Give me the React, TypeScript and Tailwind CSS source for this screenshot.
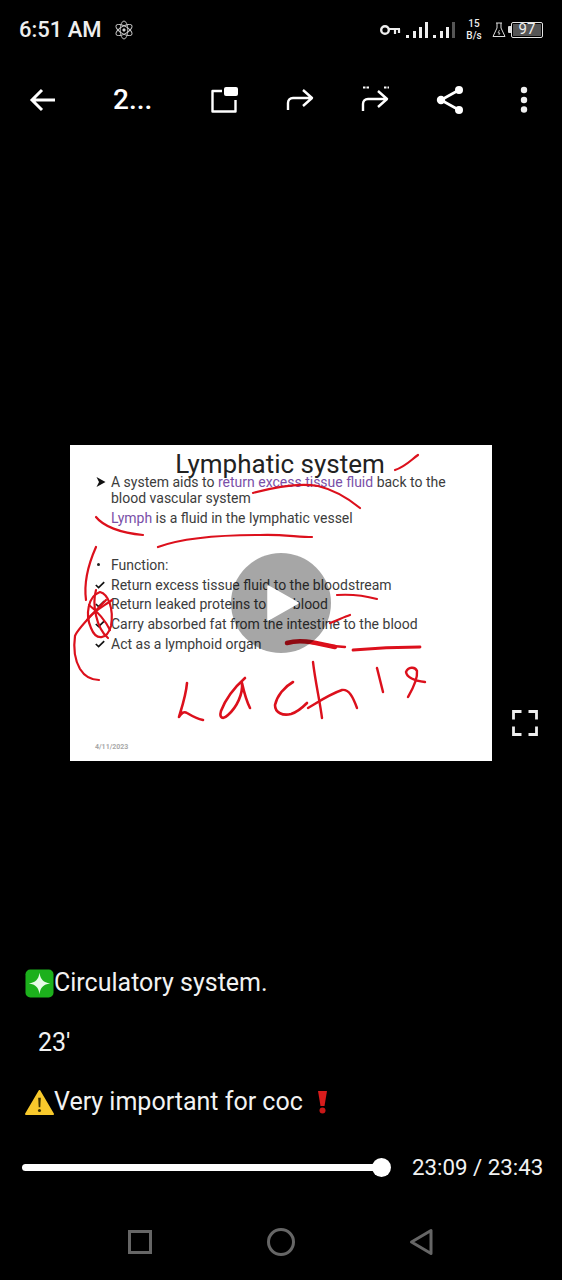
const roboto = "font-['Roboto',sans-serif]"

function Check() {
  return (
    <svg viewBox="0 0 10 8" className="h-[8px] w-[10px]">
      <path d="M.8 4 3.6 6.6 9.2 1.2" fill="none" stroke="#111" strokeWidth="1.7" />
    </svg>
  )
}

function SlideRow({ icon, children }: { icon: React.ReactNode; children: React.ReactNode }) {
  return (
    <div className="flex h-[19.75px] items-center">
      <div className="flex w-[16px] items-center">{icon}</div>
      <span className="whitespace-nowrap">{children}</span>
    </div>
  )
}

function Ink() {
  return (
    <svg viewBox="70 445 422 316" className="absolute inset-0 h-full w-full" fill="none" stroke="#dc101c" strokeWidth="2.2" strokeLinecap="round" strokeLinejoin="round">
      <path d="M395 470C405 467 411 460 418 455" />
      <path d="M253 493C275 487 300 483 318 486C335 490 349 499 360 508" />
      <path d="M96 517C103 526 120 533 143 535" />
      <path d="M158 547C185 537 225 535 260 535C280 534 298 537 312 537" />
      <path d="M96 547C88 565 84 585 86 600" />
      <path d="M106 600C92 615 78 628 75 636C73 650 76 662 80 669C85 677 92 680 99 680" />
      <path d="M100 592C88 596 85 615 91 628C96 641 107 640 111 626C114 608 108 594 100 592Z" />
      <path d="M96 590C92 604 96 628 108 638M112 600C104 606 92 612 87 620M89 605C98 612 106 622 110 630" />
      <path d="M337 595C352 594 366 596 377 599" />
      <path d="M330 623C338 620 344 617 350 615" />
      <path d="M287 643C300 639 312 642 335 647" strokeWidth="4.5" />
      <path d="M300 641C318 644 332 646 345 647" strokeWidth="2.4" />
      <path d="M353 650C375 648 400 647 420 647" strokeWidth="2.8" />
      <path d="M187 683C186 695 182 707 179 717C181 713 184 711 187 713C192 716 198 719 203 720" strokeWidth="2.6" />
      <path d="M245 678C236 686 226 698 221 711C219 718 223 720 228 715C237 707 243 694 242 683C244 692 247 702 250 708" strokeWidth="2.6" />
      <path d="M293 682C284 687 277 696 275 705C275 713 283 716 291 714C298 712 303 707 307 703" strokeWidth="2.6" />
      <path d="M313 662C315 680 320 702 322 718" strokeWidth="2.4" />
      <path d="M308 708C318 702 330 694 342 690C349 689 353 697 357 708" strokeWidth="2.4" />
      <path d="M377 668C379 676 381 684 383 692" strokeWidth="2.4" />
      <path d="M425 682C417 681 407 678 406 672C408 667 415 666 417 671C418 680 412 690 408 697" strokeWidth="2.4" />
    </svg>
  )
}

function Slide() {
  return (
    <div className={`relative h-[316px] w-[422px] bg-white text-[#3c3c3c] ${roboto}`}>
      <div className="flex flex-col pl-[25px] text-[14px] leading-[16px]">
        <div className="-ml-[27px] mt-[4px] h-[30px] text-center text-[26px] leading-[30px] text-[#222]">Lymphatic system</div>
        <div className="-mt-[7px] flex h-[20px] items-center">
          <svg viewBox="0 0 10 10" className="ml-[1px] mr-[5px] h-[10px] w-[10px]">
            <path d="M.5 0 9.5 5 .5 10 3 5Z" fill="#111" />
          </svg>
          <span className="whitespace-nowrap">
            A system aids to <span className="text-[#7a4fa8]">return excess tissue fluid</span> back to the
          </span>
        </div>
        <div className="-mt-[2px] ml-[16px] h-[16px]">blood vascular system</div>
        <div className="ml-[16px] mt-[4px] h-[16px]">
          <span className="text-[#7a4fa8]">Lymph</span> is a fluid in the lymphatic vessel
        </div>
        <div className="mt-[29px] flex flex-col">
          <SlideRow icon={<div className="ml-[2px] h-[3px] w-[3px] rounded-full bg-[#222]" />}>Function:</SlideRow>
          <SlideRow icon={<Check />}>Return excess tissue fluid to the bloodstream</SlideRow>
          <SlideRow icon={<Check />}>Return leaked proteins to the blood</SlideRow>
          <SlideRow icon={<Check />}>Carry absorbed fat from the intestine to the blood</SlideRow>
          <SlideRow icon={<Check />}>Act as a lymphoid organ</SlideRow>
        </div>
        <div className="mt-[88px] text-[7px] font-bold leading-[10px] text-[#a8a8a8]">4/11/2023</div>
      </div>
      <Ink />
      <div className="absolute left-[161px] top-[108px] flex h-[100px] w-[100px] items-center justify-center rounded-full bg-black/35">
        <svg viewBox="0 0 32 38" className="ml-[4px] h-[38px] w-[32px]">
          <path d="M1 2 31 19 1 36Z" fill="#fff" stroke="#fff" strokeWidth="1.5" strokeLinejoin="round" />
        </svg>
      </div>
    </div>
  )
}

function StatusBar() {
  return (
    <div className={`flex h-[56px] items-center pl-[19px] pr-[19px] pt-[3px] text-[#eee] ${roboto}`}>
      <span className="text-[22px] font-medium leading-none">6:51 AM</span>
      <svg viewBox="0 0 18 20" className="ml-[13px] h-[20px] w-[18px]" fill="none" stroke="#ccc" strokeWidth=".9">
        <ellipse cx="9" cy="10" rx="3.8" ry="9" />
        <ellipse cx="9" cy="10" rx="3.8" ry="9" transform="rotate(60 9 10)" />
        <ellipse cx="9" cy="10" rx="3.8" ry="9" transform="rotate(-60 9 10)" />
        <circle cx="9" cy="10" r="1.2" fill="#ddd" />
      </svg>
      <svg viewBox="0 0 21 12" className="ml-auto h-[12px] w-[21px]" fill="none" stroke="#eee">
        <circle cx="5" cy="6" r="3.8" strokeWidth="2.4" />
        <path d="M9 5H20M15 5V10M19 5V9" strokeWidth="2.2" />
      </svg>
      <svg viewBox="0 0 50 18" className="ml-[5px] h-[18px] w-[50px]" fill="#eee">
        <rect x="0" y="14" width="3" height="3" />
        <rect x="7" y="10" width="3" height="7" />
        <rect x="13" y="6" width="3" height="11" />
        <rect x="19" y="1" width="3" height="16" />
        <rect x="27" y="14" width="3" height="3" />
        <rect x="34" y="10" width="3" height="7" />
        <rect x="40" y="6" width="3" height="11" />
        <rect x="46" y="1" width="3" height="16" fill="#555" />
      </svg>
      <div className="ml-[10px] flex w-[16px] flex-col items-center text-[10px] font-medium leading-[12px]">
        <span>15</span>
        <span>B/s</span>
      </div>
      <svg viewBox="0 0 14 16" className="ml-[10px] h-[16px] w-[14px]" fill="none" stroke="#ddd" strokeWidth="1">
        <path d="M4 1H10M5 1V6L1 14.5H13L9 6V1" />
        <path d="M7.5 8 6 11H8L6.8 13" strokeWidth=".8" />
      </svg>
      <div className="ml-[2px] h-[7px] w-[3px] rounded-l-[1px] bg-[#ddd]" />
      <div className="flex h-[16px] w-[32px] items-center rounded-[2px] border border-[#e5e5e5] p-px">
        <div className="flex h-full w-full items-center justify-center bg-[#555] text-[15px] leading-none text-[#eee]">97</div>
      </div>
    </div>
  )
}

function Toolbar() {
  const icon = 'h-[30px] w-[30px]'
  return (
    <div className={`flex h-[86px] items-center pt-[2px] text-white ${roboto}`}>
      <svg viewBox="0 0 30 30" className={`ml-[28px] ${icon}`} fill="none" stroke="#fff" strokeWidth="3">
        <path d="M27 15H5M14 5 4 15 14 25" />
      </svg>
      <span className="ml-[55px] w-[39px] whitespace-nowrap text-[28px] font-medium leading-none">2...</span>
      <svg viewBox="0 0 30 30" className={`ml-[57px] ${icon}`} fill="none" stroke="#fff" strokeWidth="2.4">
        <path d="M13 6H3.5V26.5H26.5V15" strokeLinejoin="round" />
        <rect x="15" y="2" width="14" height="9" rx="2" fill="#fff" stroke="none" />
      </svg>
      <svg viewBox="0 0 30 30" className={`ml-[46px] ${icon}`} fill="none" stroke="#fff" strokeWidth="2.4">
        <path d="M3 25V18C3 15 5 13 8 13H26M18 5 27 13 18 21" strokeLinejoin="round" />
      </svg>
      <svg viewBox="0 0 30 30" className={`ml-[45px] ${icon}`} fill="none" stroke="#fff" strokeWidth="2.4">
        <path d="M3 26V19C3 16 5 14 8 14H26M18 6 27 14 18 22" strokeLinejoin="round" />
        <path d="M3 2.5H9M24 2.5H29" strokeDasharray="2.5 1" strokeWidth="2" />
      </svg>
      <svg viewBox="0 0 30 30" className={`ml-[46px] ${icon}`} fill="#fff" stroke="#fff">
        <circle cx="5" cy="15" r="4.2" stroke="none" />
        <circle cx="23" cy="5" r="4" stroke="none" />
        <circle cx="23" cy="25" r="4" stroke="none" />
        <path d="M5 15 23 5M5 15 23 25" strokeWidth="2.6" fill="none" />
      </svg>
      <svg viewBox="0 0 30 30" className={`ml-[43px] ${icon}`} fill="#eee">
        <circle cx="15" cy="5" r="3.2" />
        <circle cx="15" cy="15" r="3.2" />
        <circle cx="15" cy="24.5" r="3.2" />
      </svg>
    </div>
  )
}

function Captions() {
  return (
    <div className={`mt-[207px] flex flex-col gap-[29.5px] pl-[25px] text-[25px] leading-[30px] text-[#f2f2f2] ${roboto}`}>
      <div className="flex items-center">
        <svg viewBox="0 0 30 30" className="h-[29px] w-[29px]">
          <rect x="0.5" y="0.5" width="29" height="29" rx="5" fill="#1cb01c" />
          <path d="M15 4C16 11 19 14 26 15 19 16 16 19 15 26 14 19 11 16 4 15 11 14 14 11 15 4Z" fill="#e8fbe8" />
        </svg>
        <span>Circulatory system.</span>
      </div>
      <div className="pl-[13px]">23'</div>
      <div className="flex items-center">
        <svg viewBox="0 0 30 28" className="h-[27px] w-[29px]">
          <path d="M15 2 29 26H1Z" fill="#f8c92c" stroke="#f8c92c" strokeWidth="2" strokeLinejoin="round" />
          <path d="M13.6 9H16.4L15.8 19H14.2Z" fill="#3b3000" />
          <circle cx="15" cy="22.3" r="1.6" fill="#3b3000" />
        </svg>
        <span>Very important for coc</span>
        <svg viewBox="0 0 11 24" className="ml-[14px] h-[24px] w-[11px]">
          <path d="M1 1H10L7.5 16H3.5Z" fill="#d81c1c" />
          <circle cx="5.5" cy="20.5" r="3" fill="#c81818" />
        </svg>
      </div>
    </div>
  )
}

function Progress() {
  return (
    <div className={`mt-[35px] flex h-[30px] items-center pl-[22px] ${roboto}`}>
      <div className="relative h-[7px] w-[360px] rounded-full bg-white">
        <div className="absolute -right-[9px] -top-[6px] h-[19px] w-[19px] rounded-full bg-white" />
      </div>
      <span className="ml-[30px] whitespace-nowrap text-[22.3px] leading-none text-[#f2f2f2]">23:09 / 23:43</span>
    </div>
  )
}

function NavBar() {
  return (
    <div className="mt-[45px] flex h-[30px] items-center pl-[127px]">
      <svg viewBox="0 0 26 26" className="h-[26px] w-[26px]" fill="none" stroke="#666" strokeWidth="3">
        <rect x="2.5" y="2.5" width="21" height="21" />
      </svg>
      <svg viewBox="0 0 30 30" className="ml-[113px] h-[30px] w-[30px]" fill="none" stroke="#666" strokeWidth="3">
        <circle cx="15" cy="15" r="12.5" />
      </svg>
      <svg viewBox="0 0 24 28" className="ml-[113px] h-[28px] w-[24px]" fill="none" stroke="#666" strokeWidth="3">
        <path d="M22 2.5V25.5L2.5 14Z" strokeLinejoin="round" />
      </svg>
    </div>
  )
}

export default function App() {
  return (
    <div className="flex h-[1280px] w-[562px] flex-col overflow-hidden bg-black">
      <StatusBar />
      <Toolbar />
      <div className="ml-[70px] mt-[303px] flex items-end">
        <Slide />
        <svg viewBox="0 0 26 26" className="mb-[25px] ml-[20px] h-[26px] w-[26px]" fill="none" stroke="#eee" strokeWidth="2.8">
          <path d="M1.5 9.5V1.5H9.5M16.5 1.5H24.5V9.5M24.5 16.5V24.5H16.5M9.5 24.5H1.5V16.5" />
        </svg>
      </div>
      <Captions />
      <Progress />
      <NavBar />
    </div>
  )
}
